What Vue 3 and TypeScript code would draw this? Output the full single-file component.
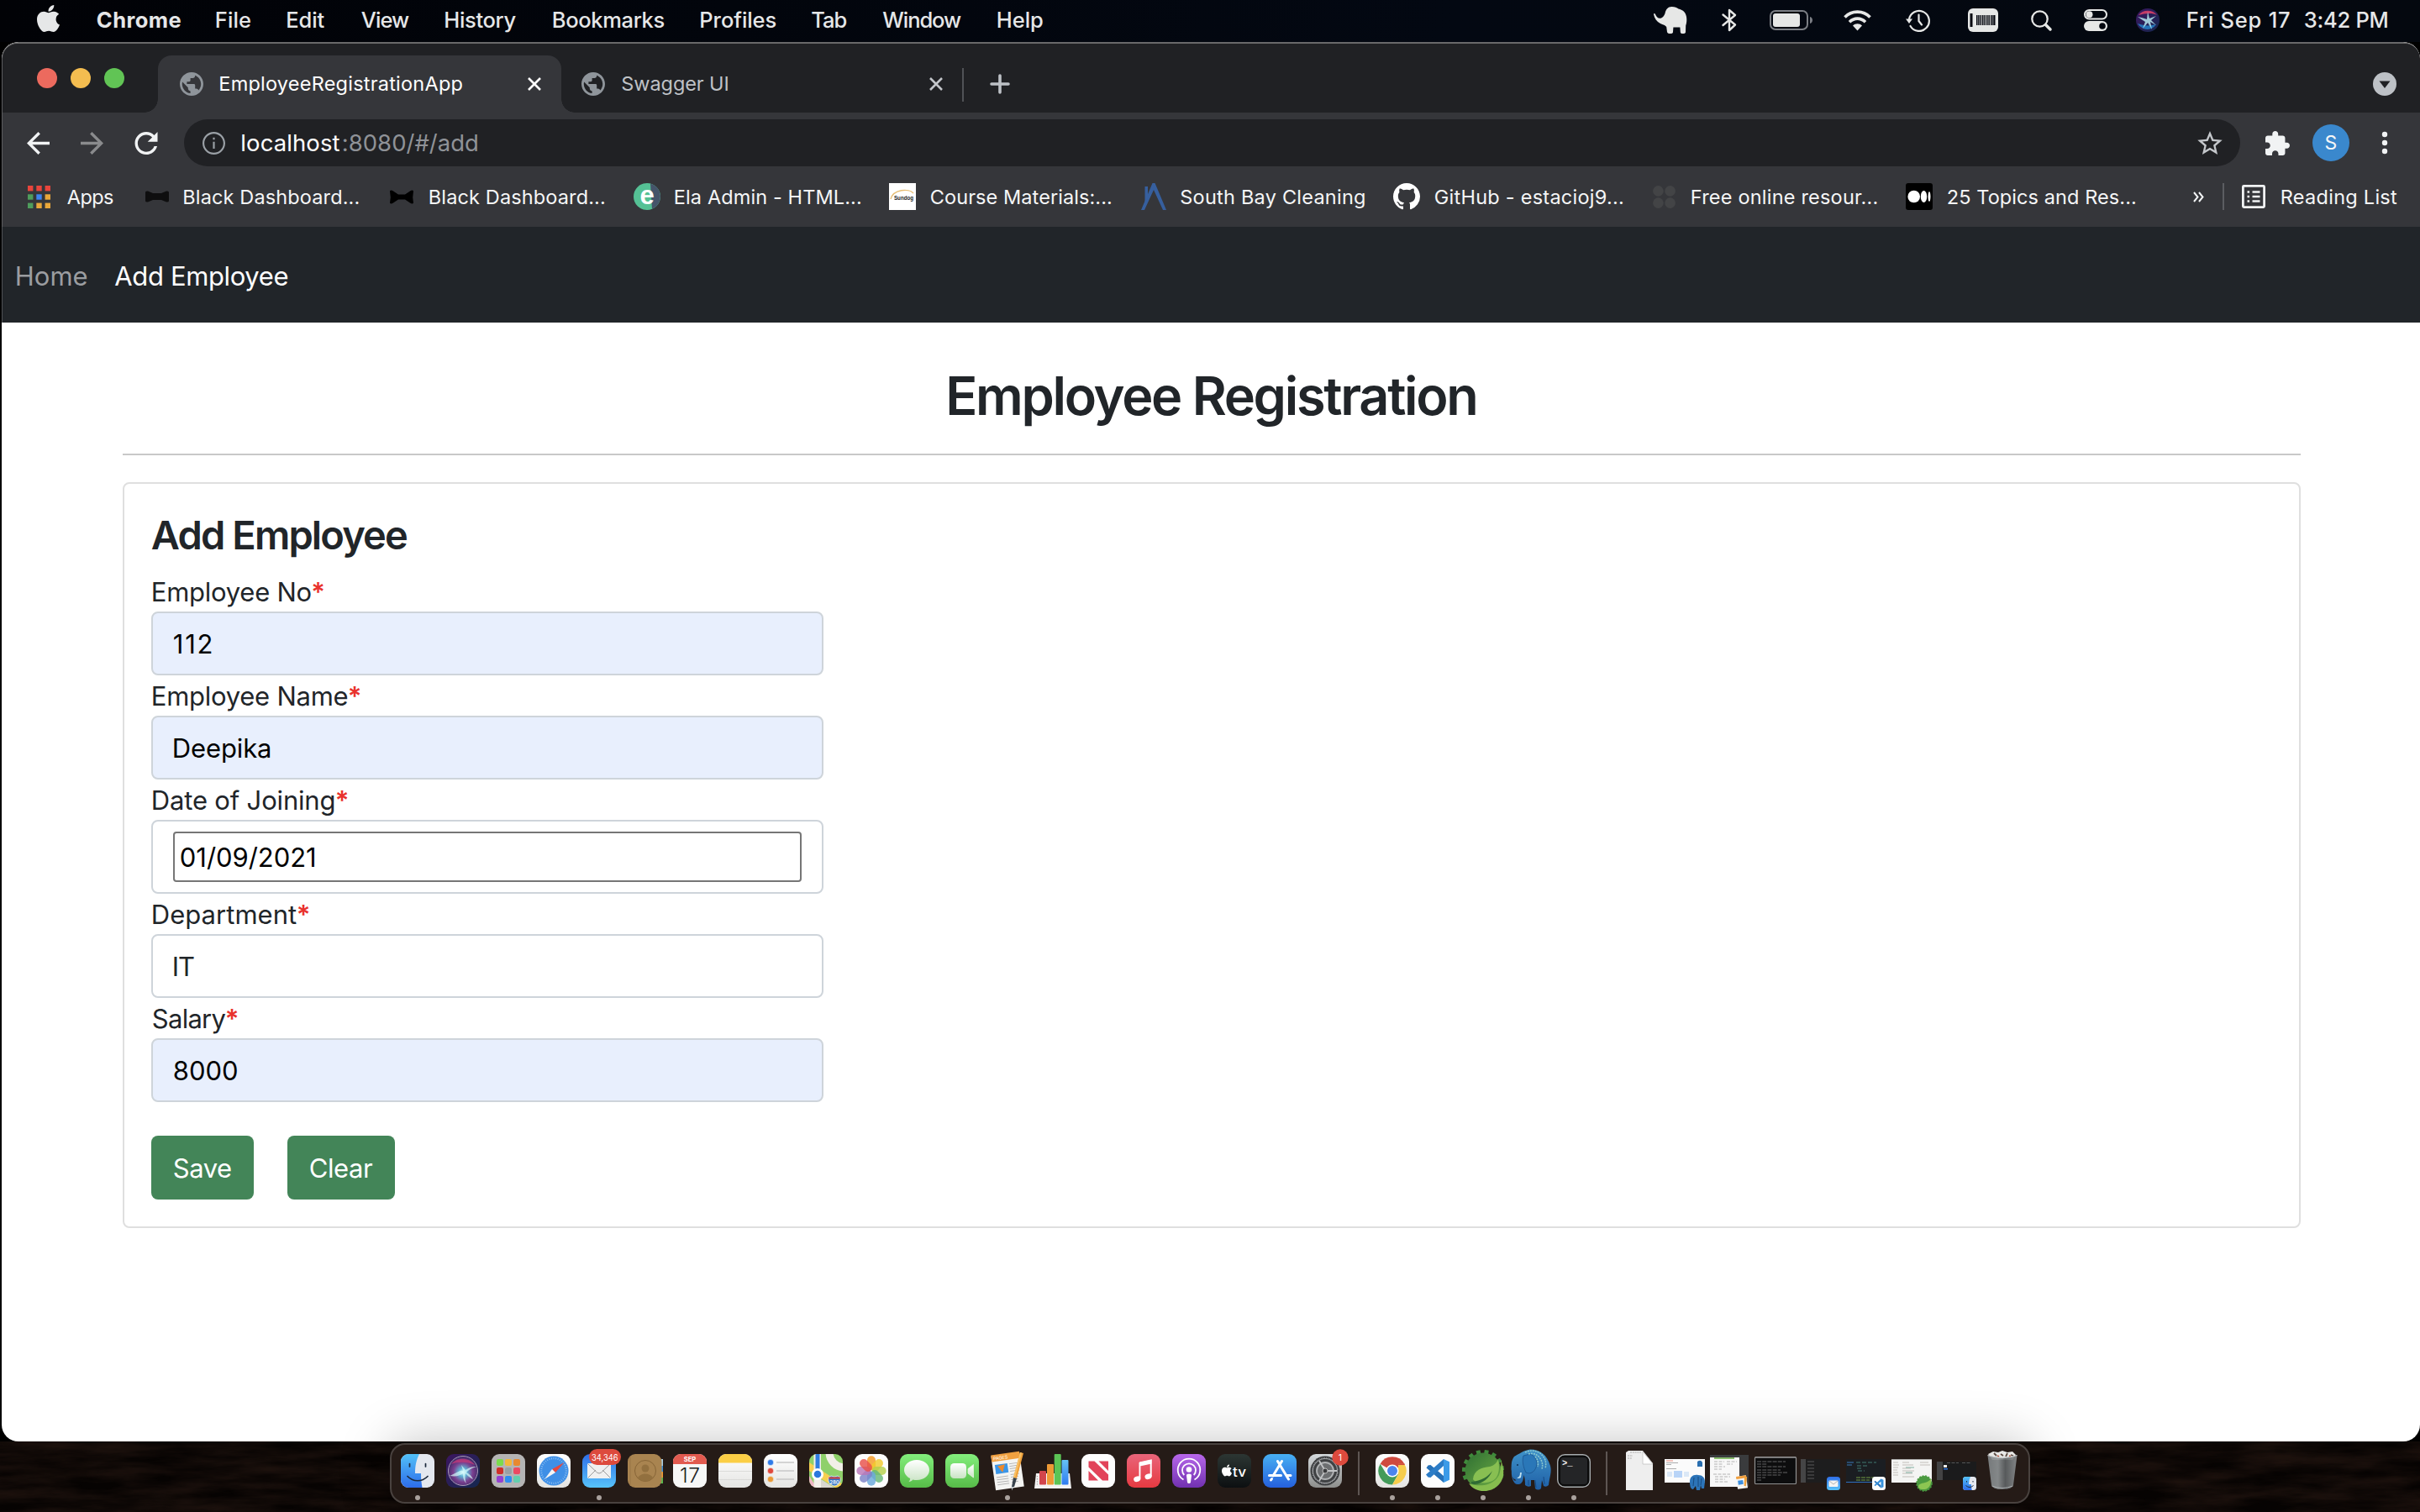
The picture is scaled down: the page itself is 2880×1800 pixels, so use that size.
<script setup lang="ts">
import { reactive } from 'vue'

type Fittable = HTMLElement & { value?: string }

// Spaces a label so that its visible glyphs start at the box edge and span the given width.
const vFit = {
  mounted(el: Fittable, binding: { value: number }) {
    const isField = el.tagName === 'INPUT' || el.tagName === 'SELECT'
    const text = isField ? String(el.value) : (el.textContent ?? '')
    const cs = getComputedStyle(el)
    const ctx = document.createElement('canvas').getContext('2d')
    if (!ctx || text.length < 2) return
    ctx.font = `${cs.fontWeight} ${cs.fontSize} ${cs.fontFamily}`
    const m = ctx.measureText(text)
    const ink = m.actualBoundingBoxLeft + m.actualBoundingBoxRight
    const start = m.actualBoundingBoxLeft + 0.8
    el.style.letterSpacing = `${((binding.value - 0.8 - ink) / (text.length - 1)).toFixed(3)}px`
    if (isField) el.style.textIndent = `${start}px`
    else el.style.marginLeft = `${start}px`
  },
}

const menus = [
  { label: 'Chrome', width: 100.5 },
  { label: 'File', width: 41 },
  { label: 'Edit', width: 45 },
  { label: 'View', width: 58 },
  { label: 'History', width: 85 },
  { label: 'Bookmarks', width: 132.5 },
  { label: 'Profiles', width: 90 },
  { label: 'Tab', width: 42 },
  { label: 'Window', width: 94.5 },
  { label: 'Help', width: 54 },
]

const form = reactive({ no: '112', name: 'Deepika', date: '01/09/2021', dept: 'IT', salary: '8000' })

const appDots = ['#e8453c', '#e8453c', '#e8453c', '#4f9d5c', '#3f83f0', '#e9a73a', '#4f9d5c', '#e9a73a', '#e9a73a']
const padColors = ['#7bdc4c', '#f3b73b', '#e88930', '#cf2f28', '#9aa0a4', '#ec4a62', '#9540d0', '#2e8df0', '#63cfae']
const petals = ['#f59a23', '#f2cb2e', '#b5cf4a', '#67b877', '#6aa8dc', '#7d83c8', '#b978b8', '#e8504a']
const gearTeeth = Array.from({ length: 10 }, (_, i) => i * 24 - 110)
const ticks = Array.from({ length: 36 }, (_, i) => i * 10)
const barcode = [0, 2.2, 4.6, 7, 9.4, 12, 14.4, 17, 19.2, 21]
</script>

<template>
  <div class="desktop">
    <svg width="0" height="0" class="defs">
      <defs>
        <linearGradient id="gBlue" x1="0" y1="0" x2="0" y2="1"><stop offset="0" stop-color="#52c1f8" /><stop offset="1" stop-color="#2d6cea" /></linearGradient>
        <linearGradient id="gMail" x1="0" y1="0" x2="0" y2="1"><stop offset="0" stop-color="#2f6fe8" /><stop offset="1" stop-color="#57c3fa" /></linearGradient>
        <linearGradient id="gStore" x1="0" y1="0" x2="0" y2="1"><stop offset="0" stop-color="#47b0f3" /><stop offset="1" stop-color="#2560dd" /></linearGradient>
        <linearGradient id="gGreen" x1="0" y1="0" x2="0" y2="1"><stop offset="0" stop-color="#83ee7c" /><stop offset="1" stop-color="#57bb48" /></linearGradient>
        <linearGradient id="gWhite" x1="0" y1="0" x2="0" y2="1"><stop offset="0" stop-color="#ffffff" /><stop offset="1" stop-color="#e4e4e2" /></linearGradient>
        <linearGradient id="gPaper" x1="0" y1="0" x2="0" y2="1"><stop offset="0" stop-color="#ffffff" /><stop offset="1" stop-color="#c9e3c4" /></linearGradient>
        <linearGradient id="gGray" x1="0" y1="0" x2="0" y2="1"><stop offset="0" stop-color="#d5d9dc" /><stop offset="1" stop-color="#8d8e8c" /></linearGradient>
        <linearGradient id="gMusic" x1="0" y1="0" x2="0" y2="1"><stop offset="0" stop-color="#e9657a" /><stop offset="1" stop-color="#e63a41" /></linearGradient>
        <linearGradient id="gPod" x1="0" y1="0" x2="0" y2="1"><stop offset="0" stop-color="#b767ea" /><stop offset="1" stop-color="#7131b0" /></linearGradient>
        <linearGradient id="gTv" x1="0" y1="0" x2="0" y2="1"><stop offset="0" stop-color="#2c3633" /><stop offset="1" stop-color="#0c0f11" /></linearGradient>
        <linearGradient id="gSpring" x1="0" y1="0" x2="1" y2="1"><stop offset="0" stop-color="#2f6f33" /><stop offset="1" stop-color="#6fae45" /></linearGradient>
        <linearGradient id="gElephant" x1="0" y1="0" x2="0" y2="1"><stop offset="0" stop-color="#3f93c9" /><stop offset="1" stop-color="#1f5fa6" /></linearGradient>
        <linearGradient id="gBin" x1="0" y1="0" x2="1" y2="0"><stop offset="0" stop-color="#7f8486" /><stop offset=".35" stop-color="#8e9395" /><stop offset=".6" stop-color="#5d6163" /><stop offset="1" stop-color="#8d9193" /></linearGradient>
        <linearGradient id="gSiriBg" x1="0" y1="0" x2="1" y2="1"><stop offset="0" stop-color="#3c1660" /><stop offset="1" stop-color="#14284f" /></linearGradient>
        <radialGradient id="gSiri" cx=".5" cy=".55" r=".55"><stop offset="0" stop-color="#e6fbff" /><stop offset=".25" stop-color="#5fb3d4" /><stop offset=".6" stop-color="#7a3f8f" /><stop offset="1" stop-color="#3a2a63" /></radialGradient>
        <linearGradient id="gBar" x1="0" y1="0" x2="0" y2="1"><stop offset="0" stop-color="#66c2f5" /><stop offset="1" stop-color="#2f7cf0" /></linearGradient>
      </defs>
    </svg>

    <header class="menubar">
      <svg class="apple" width="27" height="32" viewBox="4 32 376 448" preserveAspectRatio="none" fill="#e6e7e8"><path d="M318.700 268.700c-.2-36.700 16.400-64.400 50-84.800-18.800-26.900-47.200-41.700-84.700-44.600-35.500-2.800-74.300 20.700-88.500 20.700-15 0-49.400-19.700-76.400-19.700C63.300 141.200 4 184.800 4 273.500q0 39.300 14.400 81.200c12.800 36.700 59 126.700 107.200 125.200 25.200-.6 43-17.900 75.800-17.900 31.800 0 48.300 17.900 76.400 17.900 48.600-.7 90.400-82.500 102.600-119.300-65.200-30.700-61.700-90-61.700-91.900zm-56.600-164.200c27.300-32.400 24.800-61.900 24-72.500-24.100 1.400-52 16.400-67.900 34.900-17.500 19.800-27.800 44.300-25.600 71.900 26.100 2 49.900-11.400 69.500-34.300z" /></svg>
      <nav class="menus">
        <span v-for="(m, i) in menus" :key="m.label" v-fit="m.width" :class="{ bold: i === 0 }">{{ m.label }}</span>
      </nav>
      <div class="status">
        <svg class="mascot" width="40" height="32" viewBox="0 0 40 32" fill="#e6e7e6"><path d="M0 9c0-1.500 1.500-1.500 2 0 1.500 4 4 5.500 7 4.500 2.500-1 3.500-3 4.500-5.500C14.500 3 17 0 21.500 0c4 0 6 1 8 2.500 5 1 8.500 4 9.500 9.500.6 3.500.3 7-.8 10.500L38 30c0 1.500-1 2-3.200 2s-3-.5-3-2l-.4-5.500h-8L23 30c0 1.500-1 2-3.400 2S16.500 31.500 16 30l-.8-6C14 22 11 21.500 8 20 3.500 17.500 1 14 0 9z" /></svg>
        <svg width="18" height="28" viewBox="0 0 18 28" fill="none" stroke="#e6e7e6" stroke-width="2.400" stroke-linejoin="round" stroke-linecap="round"><path d="M1.500 7.500l14.500 12-7 6.500V2l7 6-14.500 12" /></svg>
        <svg width="52" height="24" viewBox="0 0 52 24"><rect x="1" y="1" width="44" height="22" rx="6" fill="none" stroke="#7b7e84" stroke-width="2" /><rect x="4" y="4" width="32" height="16" rx="3" fill="#e6e7e6" /><path d="M48 8c4 1 4 7 0 8z" fill="#7b7e84" /></svg>
        <svg width="33" height="25" viewBox="0 0 33 25" fill="none" stroke="#e6e7e6" stroke-width="3.600"><path d="M1.500 8.500c8-8.500 22-8.500 30 0M7 14.200c5.500-5.500 13.500-5.500 19 0" /><path d="M11 18.500c3-3 8-3 11 0l-5.500 6z" fill="#e6e7e6" stroke="none" /></svg>
        <svg width="29" height="27" viewBox="0 0 29 27" fill="none" stroke="#e6e7e6" stroke-width="2.200" stroke-linecap="round"><path d="M4 12A12 12 0 1 1 5.500 20" /><path d="M15.500 6.500v7.500l3.500 4.500" /><path d="M0 11.500h8l-4 5.500z" fill="#e6e7e6" stroke="none" /></svg>
        <svg width="36" height="28" viewBox="0 0 36 28"><rect width="36" height="28" rx="6" fill="#e6e7e6" /><rect x="2.500" y="6" width="3" height="16" fill="#04070f" /><rect v-for="(b, i) in barcode" :key="i" :x="10 + b" y="8" width="1.500" height="12" fill="#04070f" /></svg>
        <svg width="25" height="25" viewBox="0 0 25 25" fill="none" stroke="#e6e7e6" stroke-linecap="round"><circle cx="10.500" cy="10.500" r="9.200" stroke-width="2.300" /><path d="M17.500 17.500l5.500 5.500" stroke-width="3.500" /></svg>
        <svg width="28" height="26" viewBox="0 0 28 26"><rect x="1" y="1" width="26" height="10.500" rx="5.250" fill="none" stroke="#e6e7e6" stroke-width="2" /><circle cx="6.500" cy="6.200" r="4" fill="#e6e7e6" /><rect y="14" width="28" height="12" rx="6" fill="#e6e7e6" /><circle cx="22" cy="20" r="3.800" fill="#04070f" /></svg>
        <svg width="28" height="28" viewBox="0 0 28 28"><circle cx="14" cy="14" r="14" fill="url(#gSiriBg)" /><path d="M3 8C8 1 20 1 25 8c-6-3-14-2-22 0z" fill="#c43c67" /><path d="M2 18c5 8 16 10 22 1-8 2-14 2-22-1z" fill="#2473b8" /><path d="M2 10c5 1 8 2 11 3l1-9 2 8 8-3-6 5 6 6-7-4 2 9-5-8-6 7 3-8z" fill="#b5e6ee" opacity=".85" /></svg>
        <span v-fit="122">Fri Sep 17</span>
        <span v-fit="99.5">3:42 PM</span>
      </div>
    </header>

    <main class="window">
      <div class="chrome">
        <div class="tabstrip">
          <div class="lights"><i class="red"></i><i class="yellow"></i><i class="green"></i></div>
          <div class="tab active">
            <svg width="28" height="28" viewBox="2 2 20 20" fill="#8f959b"><path d="M12 2C6.480 2 2 6.480 2 12s4.480 10 10 10 10-4.480 10-10S17.520 2 12 2zm-1 17.930c-3.950-.49-7-3.850-7-7.930 0-.62.08-1.210.21-1.790L9 15v1c0 1.100.9 2 2 2v1.930zm6.900-2.540c-.26-.81-1-1.390-1.900-1.390h-1v-3c0-.55-.45-1-1-1H8v-2h2c.55 0 1-.45 1-1V7h2c1.100 0 2-.9 2-2v-.41c2.930 1.190 5 4.060 5 7.410 0 2.080-.8 3.970-2.100 5.390z" /></svg>
            <div class="tab-title"><span v-fit="289">EmployeeRegistrationApp</span></div>
            <svg width="16" height="16" viewBox="0 0 16 16" stroke="#fff" stroke-width="2.600"><path d="M1 1l14 14M15 1L1 15" /></svg>
          </div>
          <div class="tab">
            <svg width="28" height="28" viewBox="2 2 20 20" fill="#8f959b"><path d="M12 2C6.480 2 2 6.480 2 12s4.480 10 10 10 10-4.480 10-10S17.520 2 12 2zm-1 17.930c-3.950-.49-7-3.850-7-7.930 0-.62.08-1.210.21-1.790L9 15v1c0 1.100.9 2 2 2v1.930zm6.900-2.540c-.26-.81-1-1.390-1.900-1.390h-1v-3c0-.55-.45-1-1-1H8v-2h2c.55 0 1-.45 1-1V7h2c1.100 0 2-.9 2-2v-.41c2.930 1.190 5 4.060 5 7.410 0 2.080-.8 3.970-2.100 5.390z" /></svg>
            <div class="tab-title"><span v-fit="127">Swagger UI</span></div>
            <svg width="16" height="16" viewBox="0 0 16 16" stroke="#c3c6ca" stroke-width="2.600"><path d="M1 1l14 14M15 1L1 15" /></svg>
          </div>
          <i class="tab-divider"></i>
          <svg class="plus" width="24" height="24" viewBox="0 0 24 24" stroke="#bdc1c6" stroke-width="3.600" stroke-linecap="round"><path d="M12 2v20M2 12h20" /></svg>
          <svg class="tab-search" width="28" height="28" viewBox="0 0 28 28"><circle cx="14" cy="14" r="14" fill="#bdc1c6" /><path d="M7.500 10.500h13L14 19z" fill="#202124" /></svg>
        </div>

        <div class="toolbar">
          <svg width="27" height="27" viewBox="4 4 16 16" fill="#f1f3f4"><path d="M20 11H7.830l5.590-5.590L12 4l-8 8 8 8 1.410-1.410L7.830 13H20v-2z" /></svg>
          <svg width="27" height="27" viewBox="4 4 16 16" fill="#8a8b8d"><path d="M12 4l-1.410 1.410L16.170 11H4v2h12.170l-5.580 5.590L12 20l8-8z" /></svg>
          <svg width="28" height="27" viewBox="4 4 16 16" fill="#f1f3f4"><path d="M17.650 6.350C16.200 4.900 14.210 4 12 4c-4.420 0-7.990 3.580-7.990 8s3.570 8 7.990 8c3.730 0 6.840-2.550 7.730-6h-2.080c-.82 2.330-3.040 4-5.650 4-3.310 0-6-2.690-6-6s2.690-6 6-6c1.660 0 3.140.69 4.220 1.780L13 11h7V4l-2.350 2.350z" /></svg>
          <div class="omnibox">
            <svg width="27" height="27" viewBox="2 2 20 20" fill="#9aa0a6"><path d="M11.200 7h1.600v1.800h-1.600zM11.200 10.700h1.600v6.100h-1.600zM12 2C6.480 2 2 6.480 2 12s4.480 10 10 10 10-4.480 10-10S17.520 2 12 2zm0 18.400c-4.640 0-8.400-3.760-8.400-8.400S7.360 3.600 12 3.600s8.400 3.760 8.400 8.400-3.760 8.400-8.400 8.400z" /></svg>
            <div class="url"><span v-fit="117" class="host">localhost</span><span v-fit="160" class="path">:8080/#/add</span></div>
            <svg class="star" width="30" height="28" viewBox="2 2 20 19" fill="#c4c7cb"><path d="M22 9.240l-7.190-.62L12 2 9.190 8.630 2 9.240l5.460 4.730L5.820 21 12 17.270 18.180 21l-1.630-7.030L22 9.240zM12 15.400l-3.760 2.270 1-4.280-3.320-2.880 4.380-.38L12 6.100l1.710 4.040 4.380.38-3.320 2.880 1 4.280L12 15.400z" /></svg>
          </div>
          <svg width="29" height="29" viewBox="2 1 21 21" fill="#f1f3f4"><path d="M20.500 11H19V7c0-1.100-.9-2-2-2h-4V3.500C13 2.120 11.880 1 10.500 1S8 2.120 8 3.500V5H4c-1.100 0-1.990.9-1.990 2v3.800H3.500c1.490 0 2.700 1.210 2.700 2.700s-1.210 2.700-2.700 2.700H2V20c0 1.100.9 2 2 2h3.800v-1.500c0-1.490 1.210-2.700 2.700-2.700 1.490 0 2.700 1.210 2.700 2.700V22H17c1.100 0 2-.9 2-2v-4h1.500c1.380 0 2.500-1.120 2.500-2.500S21.880 11 20.500 11z" /></svg>
          <div class="avatar">S</div>
          <svg width="8" height="28" viewBox="0 0 8 28" fill="#f1f3f4"><circle cx="4" cy="4" r="3.200" /><circle cx="4" cy="14" r="3.200" /><circle cx="4" cy="24" r="3.200" /></svg>
        </div>

        <div class="bookmarks">
          <svg width="27" height="27" viewBox="0 0 27 27"><rect v-for="(c, i) in appDots" :key="i" :x="(i % 3) * 10.300" :y="Math.floor(i / 3) * 10.300" width="6.400" height="6.400" :fill="c" /></svg>
          <span v-fit="56">Apps</span>
          <svg width="28" height="14" viewBox="0 0 28 14"><path d="M0 2q0-2 3-1.500l6 2.500h10l6-2.500q3-.5 3 1.500v10q0 2-3 1.500l-6-2.500H9l-6 2.500q-3 .5-3-1.500z" fill="#0e0e0f" /></svg>
          <span v-fit="208">Black Dashboard...</span>
          <svg width="30" height="17" viewBox="0 0 30 17"><path d="M1 1.500q1-2 4 0l6 4h8l6-4q3-2 4 0-1.500 7 0 14-1 2-4 0l-6-4h-8l-6 4q-3 2-4 0 1.500-7 0-14z" fill="#000" /></svg>
          <span v-fit="208">Black Dashboard...</span>
          <svg width="32" height="32" viewBox="0 0 32 32"><circle cx="16" cy="16" r="16" fill="#55c195" /><path d="M20 .5a16 16 0 0 1 2 30.300z" fill="#45546a" /><text x="16" y="24.500" text-anchor="middle" font-family="Liberation Sans" font-weight="700" font-size="31" fill="#fff">e</text></svg>
          <span v-fit="221">Ela Admin - HTML...</span>
          <svg width="32" height="32" viewBox="0 0 32 32"><rect width="32" height="32" fill="#fff" /><path d="M2 19C5 7 24 6 29 12" fill="none" stroke="#e6bd74" stroke-width="1.300" /><text x="6" y="20" font-family="Liberation Sans" font-weight="700" font-size="7.500" textLength="23" lengthAdjust="spacingAndGlyphs" fill="#222">Sundog</text></svg>
          <span v-fit="215">Course Materials:...</span>
          <svg width="30" height="32" viewBox="0 0 30 32" fill="#365f9e"><path d="M0 32L13.500 0h3L30 32h-4L15 8 4 32z" /><path d="M4.500 4h3.500v14l-3.500 6z" /></svg>
          <span v-fit="219.500">South Bay Cleaning</span>
          <svg width="32" height="32" viewBox="0 0 16 16" fill="#fff"><path d="M8 0C3.580 0 0 3.580 0 8c0 3.540 2.290 6.530 5.470 7.590.4.070.55-.17.55-.38 0-.19-.01-.82-.01-1.490-2.010.37-2.530-.49-2.690-.94-.09-.23-.48-.94-.82-1.130-.28-.15-.68-.52-.01-.53.63-.01 1.080.58 1.230.82.72 1.210 1.870.87 2.330.66.07-.52.28-.87.51-1.070-1.780-.2-3.640-.89-3.640-3.950 0-.87.31-1.590.82-2.150-.08-.2-.36-1.020.08-2.120 0 0 .67-.21 2.200.82.64-.18 1.320-.27 2-.27s1.360.09 2 .27c1.530-1.040 2.200-.82 2.200-.82.44 1.100.16 1.920.08 2.120.51.56.82 1.270.82 2.150 0 3.070-1.870 3.750-3.650 3.950.29.25.54.73.54 1.480 0 1.070-.01 1.930-.01 2.200 0 .21.15.46.55.38A8.010 8.010 0 0 0 16 8c0-4.420-3.580-8-8-8z" /></svg>
          <span v-fit="224">GitHub - estacioj9...</span>
          <svg width="27" height="27" viewBox="0 0 27 27" fill="#434446"><circle cx="6.400" cy="6.400" r="6.300" /><circle cx="20.600" cy="6.400" r="6.300" /><circle cx="6.400" cy="20.600" r="6.300" /><circle cx="20.600" cy="20.600" r="6.300" /></svg>
          <span v-fit="220.500">Free online resour...</span>
          <svg width="32" height="32" viewBox="0 0 32 32"><rect width="32" height="32" rx="3" fill="#000" /><circle cx="9.700" cy="16" r="7.300" fill="#fff" /><ellipse cx="21.500" cy="16" rx="3.700" ry="6.900" fill="#fff" /><ellipse cx="28" cy="16" rx="1.500" ry="6" fill="#fff" /></svg>
          <span v-fit="224">25 Topics and Res...</span>
          <svg width="13" height="13" viewBox="0 0 13 13" fill="none" stroke="#f1f3f4" stroke-width="2"><path d="M1 1l4.500 5.500L1 12M7 1l4.500 5.500L7 12" /></svg>
          <i class="bar-divider"></i>
          <svg width="28" height="28" viewBox="0 0 28 28" fill="none" stroke="#f1f3f4"><rect x="1.400" y="1.400" width="25.200" height="25.200" rx="1" stroke-width="2.800" /><path d="M12.500 8.500h9M12.500 14h9M12.500 19.500h9" stroke-width="2.400" /><path d="M6.500 8.500h2.600M6.500 14h2.600M6.500 19.500h2.600" stroke-width="2.400" /></svg>
          <span v-fit="138">Reading List</span>
        </div>
      </div>

      <nav class="app-nav">
        <a class="muted"><span v-fit="84.500">Home</span></a>
        <a><span v-fit="207">Add Employee</span></a>
      </nav>

      <section class="page">
        <h2><span v-fit="628">Employee Registration</span></h2>
        <hr />
        <div class="card">
          <h4><span v-fit="304">Add Employee</span></h4>
          <form @submit.prevent>
            <label><span v-fit="188.500">Employee No</span><em>*</em></label>
            <input v-model="form.no" v-fit="45.500" class="control filled" />
            <label><span v-fit="232.500">Employee Name</span><em>*</em></label>
            <input v-model="form.name" v-fit="116" class="control filled" />
            <label><span v-fit="216.500">Date of Joining</span><em>*</em></label>
            <div class="control date"><input v-model="form.date" v-fit="160" /></div>
            <label><span v-fit="172">Department</span><em>*</em></label>
            <input v-model="form.dept" v-fit="25" class="control" />
            <label><span v-fit="87.500">Salary</span><em>*</em></label>
            <input v-model="form.salary" v-fit="76" class="control filled" />
            <div class="actions">
              <button type="submit"><span v-fit="69">Save</span></button>
              <button type="button"><span v-fit="75">Clear</span></button>
            </div>
          </form>
        </div>
      </section>
    </main>

    <footer class="shelf">
      <svg class="wood" width="2880" height="84" viewBox="0 0 2880 84">
        <filter id="grain" x="0" y="0" width="100%" height="100%" color-interpolation-filters="sRGB"><feTurbulence type="fractalNoise" baseFrequency=".012 .07" numOctaves="5" seed="8" /><feColorMatrix values="0 0 0 0 .17  0 0 0 0 .105  0 0 0 0 .08  1.700 0 0 0 -.4" /></filter>
        <rect width="2880" height="84" filter="url(#grain)" />
      </svg>
      <div class="dock">
        <div class="app running"><svg viewBox="0 0 40 40"><rect width="40" height="40" rx="9" fill="#e4e8ef" /><path d="M9 0h13c-3.500 7-5 14-5 23h7c0 6 .5 12 1.500 17H9a9 9 0 0 1-9-9V9a9 9 0 0 1 9-9z" fill="url(#gBlue)" /><path d="M10.500 11.500v3.500M29.500 11.500v3.500M8 26.500c7 7 17 7 24 0" stroke="#1c2a3c" stroke-width="1.700" fill="none" stroke-linecap="round" /></svg></div>
        <div class="app"><svg viewBox="0 0 40 40"><rect width="40" height="40" rx="9" fill="url(#gSiriBg)" /><circle cx="20" cy="20" r="17.500" fill="url(#gSiri)" stroke="#a99bb9" stroke-width="1" /><path d="M6 12c7-9 22-8 28 1-9-4-20-4-28-1z" fill="#c0397a" opacity=".8" /><path d="M4 26c8-3 12-7 16-6l-2-7 5 6c6-4 9-4 13-4-6 2-10 4-12 7 6 3 7 6 8 8-6-3-8-6-9-7-1 5 0 10 1 12-4-4-4-9-4-12-4 3-8 4-16 3z" fill="#d6fbfa" opacity=".7" /></svg></div>
        <div class="app"><svg viewBox="0 0 40 40"><rect width="40" height="40" rx="9" fill="#b5b4b4" /><rect v-for="(c, i) in padColors" :key="i" :x="6 + (i % 3) * 10" :y="6 + Math.floor(i / 3) * 10" width="8" height="8" rx="2" :fill="c" /></svg></div>
        <div class="app"><svg viewBox="0 0 40 40"><rect width="40" height="40" rx="9" fill="url(#gWhite)" /><circle cx="20" cy="20" r="17.500" fill="#3f8fe6" /><path v-for="t in ticks" :key="t" d="M20 4v2.200" stroke="#b7d9f6" stroke-width=".6" :transform="`rotate(${t} 20 20)`" /><path d="M32.500 10L22 22l-4-4z" fill="#e8473c" /><path d="M9 30L18 18l4 4z" fill="#f5f5f5" /></svg></div>
        <div class="app running"><svg viewBox="0 0 40 40"><rect width="40" height="40" rx="9" fill="url(#gMail)" /><rect x="6" y="11" width="28" height="18" rx="1.500" fill="#f0f0f0" /><path d="M7 28l9-9M33 28l-9-9M7 12l10.500 10q2.500 2 5 0L33 12" fill="none" stroke="#9b9b9b" stroke-width="1" /><rect x="8" y="-6" width="38" height="19" rx="9.500" fill="#dd4a3d" /><text x="11" y="7.800" font-family="Inter" font-size="10.500" textLength="31.500" lengthAdjust="spacingAndGlyphs" fill="#fff">34,346</text></svg></div>
        <div class="app"><svg viewBox="0 0 40 40"><path d="M38 6h4v8h-4z" fill="#a9cfe6" /><path d="M38 14h4v7h-4z" fill="#3f90d8" /><path d="M38 21h4v7h-4z" fill="#f09a36" /><path d="M38 28h4v7h-4z" fill="#58b84c" /><rect width="40.500" height="40" rx="9" fill="#a98450" /><path d="M3 3v34" stroke="#987444" stroke-width="1" /><g fill="none" stroke="#876537" stroke-width="1"><circle cx="21" cy="20" r="12.500" /></g><circle cx="21" cy="17" r="4.500" fill="#92703f" /><path d="M12 28c4-6 14-6 18 0-5 6-13 6-18 0z" fill="#92703f" /></svg></div>
        <div class="app"><svg viewBox="0 0 40 40"><rect width="40" height="40" rx="9" fill="#f7f7f6" /><path d="M0 12V9a9 9 0 0 1 9-9h22a9 9 0 0 1 9 9v3z" fill="#e25a4f" /><text x="20" y="9.300" text-anchor="middle" font-family="Inter" font-weight="700" font-size="7.600" fill="#fff">SEP</text><text x="20" y="33.500" text-anchor="middle" font-family="Inter" font-weight="300" font-size="24.500" textLength="24" fill="#222">17</text></svg></div>
        <div class="app"><svg viewBox="0 0 40 40"><rect width="40" height="40" rx="9" fill="url(#gWhite)" /><path d="M0 10.500V9a9 9 0 0 1 9-9h22a9 9 0 0 1 9 9v1.500z" fill="#fbce45" /><path d="M0 20.500h40M0 30.500h40" stroke="#d6d6d3" stroke-width=".8" /></svg></div>
        <div class="app"><svg viewBox="0 0 40 40"><rect width="40" height="40" rx="9" fill="url(#gWhite)" /><g stroke="#c7c7c7" stroke-width="1.300"><path d="M15 10h21M15 20h21M15 30h21" /></g><g stroke-opacity=".35" stroke-width="1.600"><circle cx="8" cy="10" r="3" fill="#2f7be8" stroke="#2f7be8" /><circle cx="8" cy="20" r="3" fill="#e0483b" stroke="#e0483b" /><circle cx="8" cy="30" r="3" fill="#ea9a36" stroke="#ea9a36" /></g></svg></div>
        <div class="app"><svg viewBox="0 0 40 40"><clipPath id="mapClip"><rect width="40" height="40" rx="9" /></clipPath><g clip-path="url(#mapClip)"><rect width="40" height="40" fill="#8fd06a" /><path d="M0 26l9 14H0z" fill="#efb6c4" /><circle cx="42" cy="-2" r="18" fill="none" stroke="#f2efe8" stroke-width="9" /><path d="M0 10l40 26v10L0 20z" fill="#f7cf4f" /><path d="M5.500 0h8.500v40H5.500z" fill="#f2efe8" /><path d="M14 30l16 10H14z" fill="#d9d6cf" /><path d="M7.500 0h5v22h-5z" fill="#2f7de0" /></g><circle cx="10" cy="24" r="7" fill="#fff" /><circle cx="10" cy="24" r="4.300" fill="#2b78de" /><path d="M23 28l3-2 4 1 4-1 3 2c1 6-2 9-7 10-5-1-8-4-7-10z" fill="#2f73c8" stroke="#eee" stroke-width=".8" /><path d="M23.300 28.500h13.500" stroke="#d9423a" stroke-width="2" /><text x="30" y="35.500" text-anchor="middle" font-family="Inter" font-weight="700" font-size="6" fill="#e7edf5">280</text></svg></div>
        <div class="app"><svg viewBox="0 0 40 40"><rect width="40" height="40" rx="9" fill="#fdfdfd" /><rect v-for="(c, i) in petals" :key="c" x="15" y="2.300" width="10" height="17" rx="5" :fill="c" fill-opacity=".82" :transform="`rotate(${i * 45} 20 20)`" /></svg></div>
        <div class="app"><svg viewBox="0 0 40 40"><rect width="40" height="40" rx="9" fill="url(#gGreen)" /><path d="M20 7c8.500 0 15 5.300 15 12s-6.500 12-15 12c-1.600 0-3.200-.2-4.700-.6-1 1.500-2.800 2.500-4.800 2.600 1.200-1.200 1.700-2.700 1.600-4C8 27 5 23.300 5 19 5 12.300 11.500 7 20 7z" fill="url(#gPaper)" /></svg></div>
        <div class="app"><svg viewBox="0 0 40 40"><rect width="40" height="40" rx="9" fill="url(#gGreen)" /><rect x="6" y="11" width="19" height="18" rx="4.500" fill="url(#gPaper)" /><path d="M27 17.500l6.500-5v15.500L27 23z" fill="url(#gPaper)" stroke="#e5f6e2" stroke-width=".8" stroke-linejoin="round" /></svg></div>
        <div class="app running"><svg viewBox="0 0 40 40"><g transform="rotate(-8 20 20)"><rect x="3" y="0" width="34" height="41" fill="#f4f4f2" /><rect x="3" y="-1" width="34" height="8" fill="#f0a040" /><text x="5" y="5.500" font-family="Inter" font-size="5.500" fill="#fff">PAGES</text><rect x="6" y="11" width="15" height="11" fill="#3b96e8" /><path d="M9 13l9-1-4 9z" fill="#ee8a2c" /><path d="M23 12h11M23 15h11M23 18h11M23 21h11M6 26h14M6 29h14M6 32h14M6 35h14M23 25h10M23 28h9M23 31h8M23 34h8" stroke="#b5b5b5" stroke-width="1" /></g><path d="M35-2l4 1-8 30-4-1z" fill="#f0a23c" /><path d="M35-2l2 .5-8 30-2-.5z" fill="#f8c064" /><path d="M27 28l4 1-3 10h-3z" fill="#38424c" /><path d="M25 39l2 .5-2 4z" fill="#b9c4ca" /></svg></div>
        <div class="app"><svg viewBox="0 0 40 40"><path d="M0 23h40l2 18H-2z" fill="#f3f3f3" /><path d="M1.500 26v12" stroke="#aaa" stroke-width="1.300" stroke-dasharray="1.300 1.800" /><rect x="4" y="20" width="8" height="16.500" rx="1" fill="#d2454c" /><rect x="13" y="12" width="8" height="24.500" rx="1" fill="#ee9a35" /><rect x="21.700" y="0" width="8" height="36.500" rx="1" fill="#5cc455" /><rect x="30.500" y="7" width="8" height="29.500" rx="1" fill="url(#gBar)" /></svg></div>
        <div class="app"><svg viewBox="0 0 40 40"><rect width="40" height="40" rx="9" fill="#fdfdfd" /><path d="M8.500 8.500h7L32 24.500v7h-7L8.500 15.500z" fill="#e2435a" /><path d="M20.500 8.500H32V20zM8.500 20v11.500H20z" fill="#e2435a" /></svg></div>
        <div class="app"><svg viewBox="0 0 40 40"><rect width="40" height="40" rx="9" fill="url(#gMusic)" /><path d="M15.300 10.500L28.700 7.500v19" fill="none" stroke="#fff" stroke-width="2" /><path d="M14.500 10l15-3.200v4.800l-15 3.200zM14.500 12h1.900v17h-1.900z" fill="#fff" /><ellipse cx="12.300" cy="29.700" rx="4.200" ry="3.200" fill="#fff" transform="rotate(-20 12.300 29.700)" /><ellipse cx="25.600" cy="26.700" rx="4.200" ry="3.200" fill="#fff" transform="rotate(-20 25.600 26.700)" /></svg></div>
        <div class="app"><svg viewBox="0 0 40 40"><rect width="40" height="40" rx="9" fill="url(#gPod)" /><g fill="none" stroke="#fff" stroke-width="1.800"><path d="M13.500 30.500a13.300 13.300 0 1 1 13 0" /><path d="M14.300 25a8 8 0 1 1 11.400 0" /></g><circle cx="20" cy="18.500" r="3.300" fill="#fff" /><path d="M17 25.500q0-2 3-2t3 2l-1 8q-.3 1.500-2 1.500t-2-1.500z" fill="#fff" /></svg></div>
        <div class="app"><svg viewBox="0 0 40 40"><rect width="40" height="40" rx="9" fill="url(#gTv)" /><g transform="translate(5 12.500) scale(.032 .031) translate(-4 -32)"><path fill="#fff" d="M318.700 268.700c-.2-36.700 16.400-64.400 50-84.800-18.800-26.900-47.200-41.700-84.700-44.600-35.500-2.800-74.300 20.700-88.500 20.700-15 0-49.400-19.700-76.400-19.700C63.300 141.200 4 184.800 4 273.500q0 39.300 14.400 81.200c12.800 36.700 59 126.700 107.200 125.200 25.200-.6 43-17.900 75.800-17.900 31.800 0 48.300 17.900 76.400 17.900 48.600-.7 90.400-82.500 102.600-119.300-65.200-30.700-61.700-90-61.700-91.900zm-56.600-164.200c27.300-32.400 24.800-61.900 24-72.500-24.100 1.400-52 16.400-67.900 34.900-17.500 19.800-27.800 44.300-25.600 71.900 26.100 2 49.900-11.400 69.500-34.300z" /></g><text x="18" y="26.500" font-family="Inter" font-weight="500" font-size="15.500" textLength="16" lengthAdjust="spacingAndGlyphs" fill="#fff">tv</text></svg></div>
        <div class="app"><svg viewBox="0 0 40 40"><rect width="40" height="40" rx="9" fill="url(#gStore)" /><g stroke="#fff" stroke-width="3" stroke-linecap="round"><path d="M22.500 8.500L12 26M17.500 8.500L30.500 30M7.500 25.500h14M28 25.500h5M10.500 29.500l-1 1.500" /></g></svg></div>
        <div class="app"><svg viewBox="0 0 40 40"><rect width="40" height="40" rx="9" fill="url(#gGray)" /><circle cx="20" cy="20" r="17.500" fill="#3f4143" /><g fill="none"><circle cx="20" cy="20" r="15" stroke="#9b9da0" stroke-width="2" /><circle cx="20" cy="20" r="15.800" stroke="#2d2e30" stroke-width="1.600" stroke-dasharray="1 1" /><circle cx="20" cy="20" r="10" fill="#6c6e70" stroke="#b0b2b4" stroke-width="1.800" /><path d="M20 20h14M20 20l-7-12M20 20l-7 12" stroke="#c1c3c5" stroke-width="1.800" /></g><circle cx="20" cy="20" r="3" fill="#3a3b3d" stroke="#bbb" /><circle cx="38" cy="4" r="9.700" fill="#dd4a3d" /><text x="38" y="7.700" text-anchor="middle" font-family="Inter" font-size="10.500" fill="#fff">1</text></svg></div>

        <i class="dock-divider"></i>

        <div class="app running"><svg viewBox="0 0 40 40"><rect width="40" height="40" rx="9" fill="url(#gWhite)" /><path d="M20 20L5.600 11.700A16.600 16.600 0 0 1 34.400 11.700z" fill="#cf4a3f" /><path d="M5.600 11.700L13 24l7-4 0 0 7 4-7 12.600A16.600 16.600 0 0 1 5.600 11.700z" fill="#439b5a" /><path d="M34.400 11.700A16.600 16.600 0 0 1 20 36.600L27 24v-12.300z" fill="#f6cd4c" /><path d="M20 12.300h14.700" stroke="#cf4a3f" stroke-width="1.500" /><circle cx="20" cy="20" r="7.600" fill="#fff" /><circle cx="20" cy="20" r="6" fill="#4c85ed" /></svg></div>
        <div class="app running"><svg viewBox="0 0 40 40"><rect width="40" height="40" rx="9" fill="#fdfdfd" /><path d="M27 6v28L6.500 16.500l2-3 3-.5L27 26z" fill="#2671b8" /><path d="M27 6L6 24.500l2.500 3 3 .5L27 14z" fill="#2b7cc7" /><path d="M27 6l7 3.300v21.400L27 34z" fill="#3c9be8" /></svg></div>
        <div class="app running"><svg viewBox="0 0 40 40"><g fill="#3f8a3b"><rect v-for="t in gearTeeth" :key="t" x="17.500" y="-5" width="5" height="8" :transform="`rotate(${t} 20 20)`" /></g><circle cx="20" cy="20" r="21.500" fill="url(#gSpring)" /><path d="M41 7c6 14 4 27-8 34-11 6-24 3-30-6 14 5 30 2 36-10 2-6 3-12 2-18z" fill="#86bd4e" /><path d="M38 6c3 16-1 27-14 28-9 1-14-1-16-4 1-11 10-14 20-15 5-1 8-4 10-9z" fill="#88bf52" /><path d="M6 33c12-1 20-6 25-13-4 9-11 15-21 16-3 0-5-1-4-3z" fill="#2f6b34" /></svg></div>
        <div class="app running"><svg viewBox="0 0 40 40"><path d="M-2 18c2.500 0 2.500 2 1.800 4C0 30 3 37 8 36c5 0 6-6 6.500-11 1 3 1.500 7 1.500 12q3.500 3 7 1V31h4l1 10q3.500 3 7 0l1-10 2 7q3 2 6-1c1-9 4-16 2-23C42 1 34-5.500 22-5.500 13-4 9 0 3 3-1 8 0 14-.5 17c.5 6 1 13 6 14-3 2.500-5-3-4.500-9.500 0-2.500-.5-4-3-3.500z" fill="url(#gElephant)" /><path d="M14 2c-2 6 0 14 3 20 6 3 12-2 13-10 0-6-3-10-8-12z" fill="#2a77b8" stroke="#1b538e" stroke-width=".8" /><path d="M16-2c8-4 18-2 23 7 2 4 2 8 1 12M20 0c6-2 12 1 15 7 2 4 2 7 1 11M28 3c3 3 4 8 3 12" fill="none" stroke="#8bc7cf" stroke-width="1.600" stroke-dasharray="2 1" /><path d="M20 31v6M28 31l1 9M38 27l1 9" stroke="#164b85" stroke-width="1" fill="none" /><circle cx="7" cy="13" r="1" fill="#0d2f58" /><path d="M12 22l-1 6q-3 2-5 0 4 0 4-6z" fill="#bfe0ef" /></svg></div>
        <div class="app running"><svg viewBox="0 0 40 40"><rect x=".7" y=".7" width="38.600" height="38.600" rx="8.500" fill="#0b0b0b" stroke="#a7acae" stroke-width="1.400" /><rect x="4" y="4" width="32" height="32" rx="4" fill="#242527" /><text x="6" y="14" font-family="Liberation Mono" font-weight="700" font-size="10.500" fill="#f2f2f2">&gt;_</text></svg></div>

        <i class="dock-divider slim"></i>

        <div class="app"><svg viewBox="0 0 40 40"><path d="M4-2l3-2h17l12 15v32H4z" fill="#eeeeee" /><path d="M24-3l12 15H24z" fill="#fff" stroke="#c2c2c2" stroke-width=".8" /><path d="M6 2h6M6 5h5M9-2h13" stroke="#9a9a9a" stroke-width=".8" stroke-dasharray="2 .8" /></svg></div>
        <div class="app"><svg viewBox="0 0 40 40"><rect x="-4" y="6" width="48" height="28" fill="#fbfbfb" /><path d="M-2 8h8" stroke="#e98a7d" stroke-width="1" /><path d="M-2 10.500h14M-2 12.500h6M-2 17.500h12" stroke="#999" stroke-width=".8" /><rect x="7" y="20" width="10" height="8" fill="#b9d4f7" /><rect x="-1" y="21" width="6" height="6" fill="#dbe8f6" /><rect x="19" y="21" width="6" height="6" fill="#dbe8f6" /><path d="M35 9q4-3 6 1v5h-6z" fill="#2a6fb0" /><path d="M26 33c0-6 4-9 10-8 5 0 8 3 8 8l-1 8h-3l-1-4-1 6h-4l-1-5-3 4c-3 0-4-4-4-9z" fill="#2c74b8" /><path d="M31 28l-1 10M36 27v12M40 29l-1 8" stroke="#123f70" stroke-width=".8" /></svg></div>
        <div class="app"><svg viewBox="0 0 40 40"><rect x="-4" y="1" width="46" height="38" fill="#3a3b3d" /><rect x="-4" y="4" width="35" height="35" fill="#f8f8f8" /><path d="M1 5h24" stroke="#6fae4c" stroke-width="1.600" /><path d="M1 9h12M1 12h10M1 15h13M1 18h9M16 9h12M16 12h7M0 24h20M2 27h18M2 30h12M2 33h16" stroke="#a1a1a1" stroke-width=".8" stroke-dasharray="4 1.500" /><g transform="translate(27 27) rotate(-8)"><rect width="12" height="15" fill="#f4f4f2" /><rect width="12" height="3" fill="#f0a040" /><rect x="1.500" y="5" width="6" height="5" fill="#3b8fe0" /><path d="M10 1l3 1-3 11-2-1z" fill="#f0a23c" /></g></svg></div>
        <div class="app"><svg viewBox="0 0 40 40"><rect x="-4.500" y="3.500" width="49" height="32" rx="1" fill="#0d0d0e" stroke="#909191" stroke-width="1.200" /><path d="M-4 4h48" stroke="#8f8f8f" stroke-width="1.600" /><path d="M-2 9h34M-2 12h12M-2 15h34M-2 19h28M-2 22h36M-2 25h28M-2 28h10M-2 31h5" stroke="#7b7b7b" stroke-width=".8" stroke-dasharray="5 1.200" /></svg></div>
        <div class="app"><svg viewBox="0 0 40 40"><rect x="-4" y="6" width="47" height="28" fill="#1d1d1e" /><rect x="-4" y="6" width="6" height="28" fill="#454546" /><path d="M4 9h8M4 13h8M4 17h8M4 21h8M4 25h8M4 29h8" stroke="#686868" stroke-width=".8" /><rect x="27" y="27" width="16" height="16" rx="3.500" fill="url(#gMail)" /><rect x="29.500" y="31.500" width="11" height="7.500" rx="1" fill="#f3f3f3" /><path d="M30 32l5 4 5-4" stroke="#999" fill="none" stroke-width=".7" /></svg></div>
        <div class="app"><svg viewBox="0 0 40 40"><rect x="-4" y="6" width="47" height="28" fill="#1b1e22" /><path d="M-4 33.500h47" stroke="#2c6fc0" stroke-width="1.200" /><path d="M-3 10h8M-3 13h6" stroke="#3b79b8" stroke-width="1" /><path d="M8 10h24M9 14h12M9 17h7M10 20h8" stroke="#4d8f86" stroke-width=".8" stroke-dasharray="5 2" /><path d="M8 28h22M8 31h16" stroke="#729b43" stroke-width="1" stroke-dasharray="5 1" /><rect x="27" y="27" width="16" height="16" rx="3.500" fill="#fdfdfd" /><path d="M37.500 29.500v11L29.500 33l1-1.200 7 5.500z" fill="#2671b8" /><path d="M37.500 29.500l-8 7.500 1 1.200 7-5.500zM37.500 29.500l3 1.300v8.400l-3 1.300z" fill="#3590dc" /></svg></div>
        <div class="app"><svg viewBox="0 0 40 40"><rect x="-4" y="6" width="48" height="28" fill="#f4f4f3" /><path d="M-4 6.500h48" stroke="#aaa" /><path d="M-2 10h6M-2 13h7M-2 16h6M-2 19h5M-2 22h6M-2 25h6M9 10h8M9 13h13M9 17h10M9 20h14M9 23h12M9 27h14M30 10h10M30 13h12" stroke="#ada7a0" stroke-width=".7" /><path d="M13 16h10M13 22h8" stroke="#80b0a0" stroke-width="1" /><circle cx="35" cy="35" r="9" fill="#4b9a40" stroke="#4b9a40" stroke-width="1.500" stroke-dasharray="2 1.600" /><path d="M43 29c1 8-3 13-9 13-4 0-6-1-6-4 1-5 12-2 15-9z" fill="#8cc652" /></svg></div>
        <div class="app"><svg viewBox="0 0 40 40"><rect x="-4" y="9" width="47" height="22" fill="#1b1b1c" /><rect x="-4" y="9" width="7" height="22" fill="#434344" /><path d="M8 10.500h14M26 10.500h10" stroke="#666" stroke-width=".8" stroke-dasharray="4 1.500" /><rect x="4" y="13" width="4" height="3" fill="#eee" /><rect x="4" y="17" width="5" height="1.500" fill="#2f74e0" /><rect x="27" y="27" width="16" height="16" rx="3.500" fill="#e4e8ef" /><path d="M30.500 27H36q-2 4-2 9h3q0 4 .7 7h-7.200a3.500 3.500 0 0 1-3.500-3.500v-9a3.500 3.500 0 0 1 3.500-3.500z" fill="url(#gBlue)" /><path d="M31.500 32v1.500M39 32v1.500M30.500 37.500q4.500 4 9 0" stroke="#1c2a3c" fill="none" /></svg></div>
        <div class="app"><svg viewBox="0 0 40 40"><path d="M3 0l6-3 6 1 5-2 6 2 6-1 4 4-4 6H8z" fill="#e8e8e6" /><path d="M10-1l3 3M18 0l3 2M26-1l-2 4M30 1l3 1" stroke="#5b4a42" stroke-width="1.800" /><path d="M28 2l2 1M14 2l2 1" stroke="#b5523c" stroke-width="1.500" /><path d="M2.500 1.500q17.500 6 35 0L33 37q-1 5-13 5T7 37z" fill="url(#gBin)" fill-opacity=".9" /><path d="M2.500 1.500q17.500 6 35 0" fill="none" stroke="#c9cccd" stroke-width="1.300" /><path d="M7.500 38q12.500 5 25 0" fill="none" stroke="#a9adaf" stroke-width="1" /></svg></div>
      </div>
    </footer>
  </div>
</template>

<style>
html,
body {
  margin: 0;
  background: #020205;
}
</style>

<style scoped>
* {
  box-sizing: border-box;
}
.desktop {
  width: 2880px;
  height: 1800px;
  overflow: hidden;
  display: flex;
  flex-direction: column;
  background: #000;
  font-family: Inter, 'Liberation Sans', sans-serif;
  font-weight: 430;
  white-space: pre;
}
.desktop svg {
  display: block;
  flex: none;
  overflow: visible;
}
.defs {
  position: absolute;
}

.menubar {
  height: 50px;
  flex: none;
  display: flex;
  background: linear-gradient(90deg, #010206, #030812 60%, #04080f);
  color: #e6e7e8;
  font-size: 25.5px;
  font-weight: 450;
  padding: 0 38px 0 44px;
}
.apple {
  margin: 6px 44px 0 0;
}
.menus {
  display: grid;
  grid-template-columns: 142px 84.500px 87.500px 100.500px 128.500px 175.500px 132px 84px 137.500px 60px;
  line-height: 47.500px;
  height: 48px;
  flex: 1;
}
.menus .bold {
  font-weight: 700;
}
.status {
  display: grid;
  grid-template-columns: 80px 57px 88px 74px 74px 74.500px 63.500px 62px 61px 139px 100px;
  height: 48px;
  line-height: 46px;
  align-items: center;
}
.mascot {
  margin-left: -1px;
}

.window {
  position: relative;
  flex: none;
  height: 1666px;
  width: 2878px;
  margin-left: 2px;
  border-radius: 20px;
  overflow: hidden;
  background: #fff;
  display: flex;
  flex-direction: column;
}
.chrome {
  height: 220px;
  flex: none;
  background: #35363a;
  border-top: 2px solid #69696a;
  border-left: 1px solid #5d5e60;
  border-radius: 20px 20px 0 0;
  color: #f5f6f7;
}
.tabstrip {
  height: 82px;
  background: #202124;
  border-radius: 18px 18px 0 0;
  display: flex;
  align-items: flex-start;
  padding: 14px 28px 0 41px;
  font-size: 23.5px;
}
.lights {
  display: flex;
  gap: 16px;
  padding: 15px 40px 0 0;
}
.lights i {
  width: 24px;
  height: 24px;
  border-radius: 50%;
}
.red {
  background: #ec6a5e;
}
.yellow {
  background: #f4bd50;
}
.green {
  background: #61c455;
}
.tab {
  position: relative;
  width: 477px;
  height: 68px;
  padding-left: 24px;
  display: flex;
  align-items: center;
  color: #bfc2c6;
  line-height: 68px;
}
.tab.active {
  width: 480px;
  padding-left: 26px;
  background: #35363a;
  border-radius: 16px 16px 0 0;
  color: #fff;
}
.tab.active::before,
.tab.active::after {
  content: '';
  position: absolute;
  bottom: 0;
  width: 16px;
  height: 16px;
}
.tab.active::before {
  left: -16px;
  background: radial-gradient(circle at 0 0, transparent 15.5px, #35363a 16px);
}
.tab.active::after {
  right: -16px;
  background: radial-gradient(circle at 100% 0, transparent 15.5px, #35363a 16px);
}
.tab-title {
  width: 386px;
  padding-left: 19.5px;
  display: flex;
}
.tab-divider {
  width: 2px;
  height: 40px;
  margin-top: 15px;
  background: #505256;
}
.plus {
  margin: 22px 0 0 31px;
}
.tab-search {
  margin: 20px 0 0 auto;
}

.toolbar {
  height: 72px;
  display: grid;
  grid-template-columns: 64px 64px 59px 2477px 56px 82px 8px;
  align-items: center;
  padding-left: 29px;
}
.omnibox {
  height: 56px;
  margin-right: 30px;
  display: flex;
  align-items: center;
  background: #202124;
  border-radius: 28px;
  padding: 0 21px 0 22px;
  font-size: 27.5px;
  line-height: 56px;
}
.url {
  display: grid;
  grid-template-columns: 120.5px 200px;
  padding-left: 19.5px;
}
.host {
  color: #fff;
}
.path {
  color: #8f9297;
}
.star {
  margin-left: auto;
}
.avatar {
  width: 44px;
  height: 44px;
  border-radius: 50%;
  background: #3a88cd;
  text-align: center;
  font-size: 23px;
  line-height: 44px;
}
.bookmarks {
  height: 56px;
  display: grid;
  grid-template-columns:
    46px 94px 45.500px 244.500px 48px 243px 49px 255px 49px 251px 46.500px 253.500px 49px 259.500px
    46.500px 255px 49px 292.500px 35.500px 23px 47px 138px;
  align-items: center;
  padding-left: 30px;
  font-size: 23.5px;
  line-height: 55px;
}
.bookmarks > :first-child {
  margin-left: -0.5px;
}
.bar-divider {
  width: 2px;
  height: 32px;
  background: #5b5d61;
}

.app-nav {
  height: 114px;
  flex: none;
  background: #212529;
  border-left: 1px solid #4f5255;
  display: grid;
  grid-template-columns: 116.5px 300px;
  padding-left: 16px;
  line-height: 117px;
  font-size: 31px;
  color: #fff;
}
.app-nav a {
  display: flex;
}
.app-nav .muted {
  color: #9b9da0;
}

.page {
  width: 2592px;
  margin: 48px 0 0 144px;
  color: #212529;
  font-size: 31px;
}
.page h2 {
  margin: 0;
  display: flex;
  justify-content: center;
  padding-left: 2px;
  height: 77px;
  font-size: 63px;
  line-height: 79px;
  font-weight: 560;
}
.page hr {
  margin: 31px 0 32px;
  border: 0;
  height: 2px;
  background: #c8c8c8;
}
.card {
  height: 888px;
  border: 2px solid #dfdfdf;
  border-radius: 8px;
  padding: 32px;
}
.card h4 {
  margin: 0;
  height: 72px;
  display: flex;
  font-size: 47px;
  line-height: 57px;
  font-weight: 560;
}
form {
  width: 800px;
  display: flex;
  flex-direction: column;
}
label {
  display: flex;
  height: 48px;
  line-height: 49px;
  padding-left: 1px;
}
label em {
  color: #e9322d;
  font-style: normal;
  font-weight: 600;
  margin-left: -0.5px;
}
.control {
  width: 800px;
  height: 76px;
  padding: 0 24px;
  border: 2px solid #ced4da;
  border-radius: 8px;
  background: #fff;
  color: #212529;
  font: inherit;
  outline: none;
  box-sizing: border-box;
}
.control.filled {
  background: #e8effd;
  color: #000;
}
.control.date {
  height: 88px;
  padding: 12px 24px;
}
.date input {
  width: 100%;
  height: 60px;
  box-sizing: border-box;
  border: 2px solid #767676;
  border-radius: 4px;
  padding: 0 6px;
  font: inherit;
  color: #000;
  display: block;
}
.actions {
  display: flex;
  gap: 40px;
  margin-top: 40px;
}
.actions button {
  height: 76px;
  width: 122px;
  padding: 0 0 0 26px;
  border: 0;
  border-radius: 8px;
  background: #438558;
  color: #fff;
  font: inherit;
  display: flex;
  align-items: center;
}
.actions button + button {
  width: 128px;
}

.shelf {
  position: relative;
  height: 84px;
  flex: none;
  display: flex;
  background: #060302;
}
.wood {
  position: absolute;
  opacity: 0.6;
}
.dock {
  position: relative;
  z-index: 1;
  width: 1952px;
  height: 72px;
  margin: 2px 0 0 464px;
  padding-left: 4px;
  display: flex;
  background: #251b17;
  border: 2px solid #49423f;
  border-radius: 18px;
  box-shadow: 0 0 60px rgba(0, 0, 0, 0.25);
}
.app {
  width: 54px;
  flex: none;
  display: flex;
  flex-direction: column;
  align-items: center;
}
.app svg {
  width: 40px;
  height: 40px;
  margin-top: 11px;
}
.app.running::after {
  content: '';
  width: 6px;
  height: 6px;
  margin-top: 9px;
  border-radius: 50%;
  background: #a9a19d;
}
.dock-divider {
  flex: none;
  width: 2px;
  height: 52px;
  margin: 8px 12px 0;
  background: #5e5653;
}
.dock-divider.slim {
  margin: 8px 11px 0;
}
</style>
